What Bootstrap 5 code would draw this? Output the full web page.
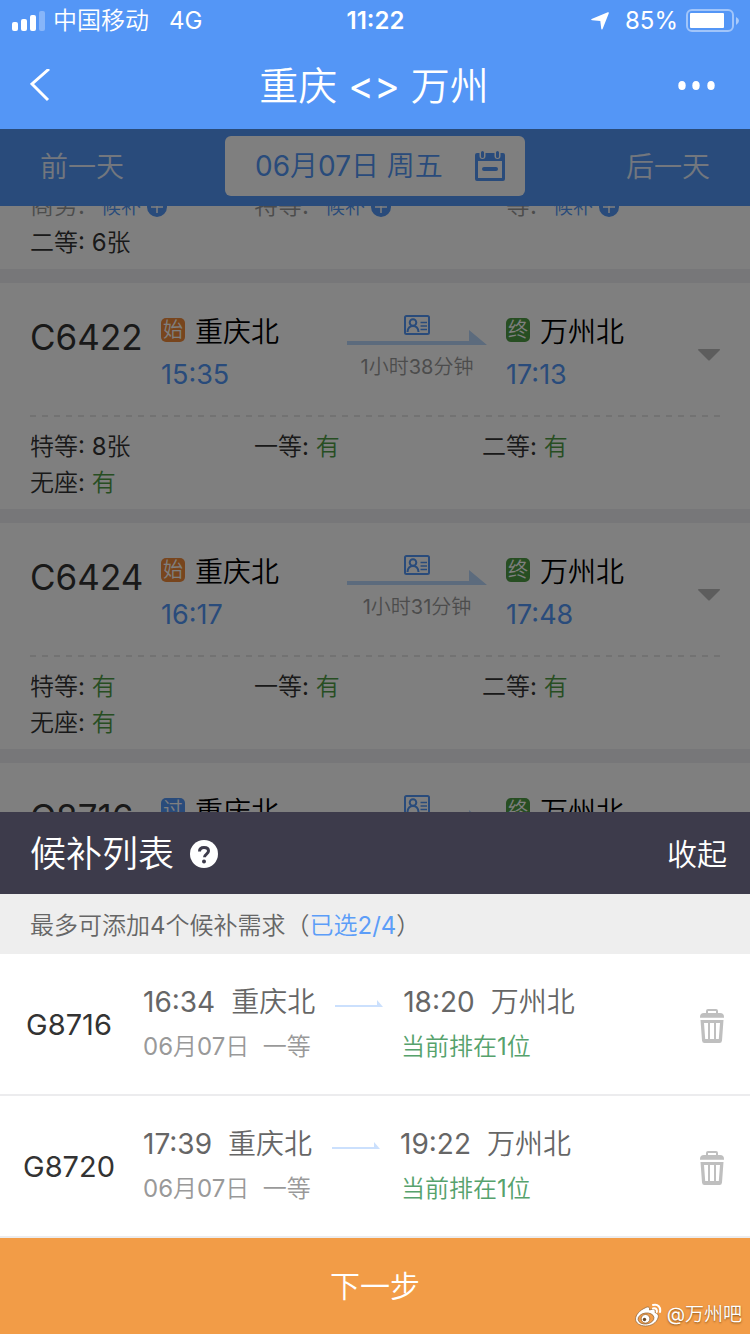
<!DOCTYPE html>
<html lang="zh-CN">
<head>
<meta charset="utf-8">
<meta name="viewport" content="width=device-width, initial-scale=1">
<title>重庆 - 万州 候补购票</title>
<link rel="stylesheet" href="https://cdn.jsdelivr.net/npm/bootstrap@5.3.0/dist/css/bootstrap.min.css">
<style>
  :root { --sky: #5496f6; --ink: #333; --leaf: #4e9c45; }
  body { font-family: Inter, "Noto Sans CJK SC DemiLight", "Noto Sans CJK SC", sans-serif; font-weight: 400; color: var(--ink); background: #fff; font-size: 24px; line-height: 36px; }
  button { font-weight: inherit; }
  svg { display: block; flex: none; }
  .plain { background: none; border: 0; padding: 0; color: inherit; }

  .app-top { background: var(--sky); color: #fff; }
  .status { height: 40px; padding: 2px 11px 0 12px; }
  .status > * { flex: 1; }
  .clock { font-weight: 600; }
  .network { margin-left: 20px; }
  .title-row { height: 89px; padding: 2px 32px 0 30px; }
  .title-row h1 { font-size: 39px; font-weight: 400; line-height: 56px; }
  .title-row button { width: 40px; }

  .date-bar { background: #5297f6; color: #e6effc; font-size: 28px; line-height: 44px; padding: 7px 40px 10px; }
  .date-bar button { padding-top: 2px; }
  .date-bar .date-pick { background: #fff; color: #5297f6; border-radius: 6px; height: 60px; width: 40vw; padding: 0 20px 0 30px; }

  .results { background: #eeeef3; overflow: hidden; min-height: 0; }
  .train { background: #fff; padding: 0 30px 8px; margin-bottom: 14px; }
  .train.scrolled { margin-top: -18px; }
  .seats { display: grid; grid-template-columns: 224fr 228fr 238fr; }
  .seats b { font-weight: 400; color: var(--leaf); }
  .wait-row { height: 37px; color: #999; }
  .wait-row a { color: #5297f6; font-size: 20px; text-decoration: none; gap: 6px; }
  .trip { display: grid; grid-template-columns: 131fr 186fr 140fr 19fr 190fr 24px; height: 132px; padding-top: 30px; }
  .train-no { font-size: 35px; line-height: 48px; }
  .stop { font-size: 28px; line-height: 38px; color: #000; }
  .hour { font-size: 27px; color: #5297f6; margin-top: 6px; }
  .tag { width: 24px; height: 24px; border-radius: 5px; font-size: 20px; line-height: 24px; color: #fff; text-align: center; margin: 0 10px 5px 0; }
  .tag-start { background: #f08a3a; } .tag-end { background: var(--leaf); } .tag-pass { background: #5297f6; }
  .ride { font-size: 20px; color: #999; line-height: 28px; }
  .more { padding-top: 35px; }
  .dashes { height: 2px; margin-bottom: 12px; background: repeating-linear-gradient(90deg, #e4e4e4 0 6px, transparent 6px 12px); }
  .shade { position: absolute; inset: 0; background: rgba(0,0,0,.5); }

  .sheet-head { background: #3d3b4b; color: #fff; height: 82px; padding: 2px 23px 0 30px; }
  .sheet-head h2 { font-size: 36px; font-weight: 400; line-height: 48px; }
  .fold { font-size: 30px; }
  .note { background: #eee; color: #666; padding: 14px 30px 10px; }
  .note span { color: #5c9df8; }
  .queue { height: 142px; border-bottom: 2px solid #ececee; padding: 4px 26px 0 0; }
  .queue-no { width: 138px; font-size: 29px; line-height: 40px; text-align: center; margin: 0 5px 2px 0; }
  .queue-main { font-size: 28px; color: #666; line-height: 42px; gap: 16px; }
  .queue-sub { color: #999; line-height: 48px; }
  .queue-sub > span:first-child { width: 258px; }
  .queue-sub .rank { color: #56a26c; }
  .next { background: #f29c47; color: #fff; height: 96px; font-size: 30px; }
  .credit { position: absolute; right: 8px; bottom: 4px; font-size: 19px; line-height: 30px; color: #fff; gap: 5px; text-shadow: 0 1px 2px rgba(90,50,0,.7); }
</style>
</head>
<body>
<svg width="0" height="0" class="position-absolute" aria-hidden="true">
  <symbol id="ride-line" viewBox="0 0 140 40">
    <path d="M0 28h122V17l18 15H0z" fill="#b8d6fb"/>
    <g fill="none" stroke="#5297f6" stroke-width="2"><rect x="58" y="3" width="24" height="18" rx="1.500"/><circle cx="66" cy="9.500" r="3.300"/><path d="M60.500 19c.3-4 2.500-6 5.500-6s5.200 2 5.500 6"/><path d="M73.500 9.500H80M73.500 13H80M73.500 16.500H80" stroke-width="1.500"/></g>
  </symbol>
  <symbol id="caret" viewBox="0 0 24 14"><path d="M3 1h20q2 0 .5 1.500L14 12q-1 1-2 0L2.500 2.500Q1 1 3 1z" fill="#bbb"/></symbol>
  <symbol id="plus" viewBox="0 0 20 20"><circle cx="10" cy="10" r="10" fill="#5297f6"/><path d="M10 4v12M4 10h12" stroke="#fff" stroke-width="1.500"/></symbol>
  <symbol id="short-line" viewBox="0 0 48 12"><path d="M0 9h42V4l6 7H0z" fill="#cbe0fd"/></symbol>
  <symbol id="bin" viewBox="0 0 24 34"><path fill="#bfbfbf" fill-rule="evenodd" d="M6 4V2q0-2 2-2h8q2 0 2 2v2h2q4 0 4 4v.7H0V8q0-4 4-4zm2 0h8V2H8zM.5 11h23L22 31.500q-.2 2.500-2.500 2.500h-15Q2.200 34 2 31.500zM4 14l1.200 16H8V14zm6 0v16h4V14zm6 0v16h2.800L20 14z"/></symbol>
</svg>

<div class="d-flex flex-column vh-100">
  <header class="app-top">
    <div class="status d-flex align-items-center">
      <div class="d-flex align-items-center">
        <svg width="33" height="20" viewBox="0 0 33 20" fill="#fff"><rect y="11" width="6" height="9" rx="2"/><rect x="9" y="8" width="6" height="12" rx="2"/><rect x="18" y="4" width="6" height="16" rx="2"/><rect x="27" width="6" height="20" rx="2" opacity=".3"/></svg>
        <span class="ms-2">中国移动</span><span class="network">4G</span>
      </div>
      <div class="clock text-center">11:22</div>
      <div class="d-flex align-items-center justify-content-end">
        <svg class="me-3" width="18" height="18" viewBox="0 0 18 18"><path d="M16.800.2q1.400-.3 1 1L11.800 16.500q-.9 2.300-1.600 0L9.300 9 1.200 8.300q-2.200-.6 0-1.600z" fill="#fff"/></svg>
        <span class="me-2">85%</span>
        <svg width="53" height="24" viewBox="0 0 53 24"><rect x="1" y="1" width="46" height="21" rx="5" fill="none" stroke="#fff" stroke-opacity=".45" stroke-width="2"/><rect x="4" y="4" width="34" height="15" rx="1" fill="#fff"/><path d="M50 8q6 3.500 0 8z" fill="#fff" opacity=".5"/></svg>
      </div>
    </div>
    <div class="title-row d-flex align-items-center justify-content-between">
      <button class="plain" aria-label="返回"><svg width="22" height="34" viewBox="0 0 22 34"><path d="M19 0 2 15l16 16" fill="none" stroke="#fff" stroke-width="3"/></svg></button>
      <h1 class="m-0">重庆 &lt;&gt; 万州</h1>
      <button class="plain" aria-label="更多"><svg width="40" height="10" viewBox="0 0 40 10" fill="#fff"><ellipse cx="4" cy="4.500" rx="3.700" ry="4.500"/><ellipse cx="18" cy="4.500" rx="3.700" ry="4.500"/><ellipse cx="33" cy="4.500" rx="3.700" ry="4.500"/></svg></button>
    </div>
  </header>

  <main class="position-relative flex-grow-1 d-flex flex-column overflow-hidden">
    <div class="date-bar d-flex align-items-center justify-content-between">
      <button class="plain">前一天</button>
      <button class="plain date-pick d-flex align-items-center justify-content-between">
        <span>06月07日 周五</span>
        <svg width="30" height="30" viewBox="0 0 30 30"><path fill="#5297f6" fill-rule="evenodd" d="M2 2h2.500v3q0 3 3 3t3-3V2h9v3q0 3 3 3t3-3V2H28q2 0 2 2v24q0 2-2 2H2q-2 0-2-2V4q0-2 2-2zm1 8v17h24V10z"/><path d="M7.500 1.500v4M22.500 1.500v4" stroke="#5297f6" stroke-width="3" stroke-linecap="round"/><path d="M9 18h12" stroke="#5297f6" stroke-width="4" stroke-linecap="round"/></svg>
      </button>
      <button class="plain">后一天</button>
    </div>

    <div class="results flex-grow-1">
      <section class="train scrolled">
        <div class="seats wait-row">
          <div class="d-flex">商务: <a href="#" class="d-flex align-items-center ms-3">候补<svg width="20" height="20"><use href="#plus"/></svg></a></div>
          <div class="d-flex">特等: <a href="#" class="d-flex align-items-center ms-3">候补<svg width="20" height="20"><use href="#plus"/></svg></a></div>
          <div class="d-flex">一等: <a href="#" class="d-flex align-items-center ms-3">候补<svg width="20" height="20"><use href="#plus"/></svg></a></div>
        </div>
        <div class="seats"><div>二等: 6张</div></div>
      </section>

      <section class="train">
        <div class="trip">
          <div class="train-no">C6422</div>
          <div><div class="stop d-flex align-items-center"><span class="tag tag-start">始</span>重庆北</div><div class="hour">15:35</div></div>
          <div class="ride text-center"><svg class="w-100" height="40"><use href="#ride-line"/></svg>1小时38分钟</div>
          <div></div>
          <div><div class="stop d-flex align-items-center"><span class="tag tag-end">终</span>万州北</div><div class="hour">17:13</div></div>
          <button class="plain more align-self-start" aria-label="展开"><svg width="24" height="14"><use href="#caret"/></svg></button>
        </div>
        <div class="dashes"></div>
        <div class="seats"><div>特等: 8张</div><div>一等: <b>有</b></div><div>二等: <b>有</b></div><div>无座: <b>有</b></div></div>
      </section>

      <section class="train">
        <div class="trip">
          <div class="train-no">C6424</div>
          <div><div class="stop d-flex align-items-center"><span class="tag tag-start">始</span>重庆北</div><div class="hour">16:17</div></div>
          <div class="ride text-center"><svg class="w-100" height="40"><use href="#ride-line"/></svg>1小时31分钟</div>
          <div></div>
          <div><div class="stop d-flex align-items-center"><span class="tag tag-end">终</span>万州北</div><div class="hour">17:48</div></div>
          <button class="plain more align-self-start" aria-label="展开"><svg width="24" height="14"><use href="#caret"/></svg></button>
        </div>
        <div class="dashes"></div>
        <div class="seats"><div>特等: <b>有</b></div><div>一等: <b>有</b></div><div>二等: <b>有</b></div><div>无座: <b>有</b></div></div>
      </section>

      <section class="train">
        <div class="trip">
          <div class="train-no">G8716</div>
          <div class="stop d-flex align-items-center align-self-start"><span class="tag tag-pass">过</span>重庆北</div>
          <div class="ride"><svg class="w-100" height="40"><use href="#ride-line"/></svg></div>
          <div></div>
          <div class="stop d-flex align-items-center align-self-start"><span class="tag tag-end">终</span>万州北</div>
        </div>
      </section>
    </div>
    <div class="shade"></div>
  </main>

  <section>
    <div class="sheet-head d-flex align-items-center">
      <h2 class="m-0">候补列表</h2>
      <button class="plain ms-3" aria-label="帮助"><svg width="28" height="28" viewBox="0 0 28 28"><circle cx="14" cy="14" r="14" fill="#fff"/><path d="M9.500 11.500q0-4 4.500-4t4.500 3.600c0 3-4 3.200-4 6.200" fill="none" stroke="#3d3b4b" stroke-width="3"/><circle cx="14" cy="21.500" r="2" fill="#3d3b4b"/></svg></button>
      <button class="plain fold ms-auto">收起</button>
    </div>
    <div class="note">最多可添加4个候补需求（<span>已选2/4</span>）</div>
    <div class="queue d-flex align-items-center">
      <div class="queue-no">G8716</div>
      <div class="flex-grow-1">
        <div class="queue-main d-flex align-items-center"><span>16:34</span><span>重庆北</span><svg class="mx-1" width="48" height="12"><use href="#short-line"/></svg><span>18:20</span><span>万州北</span></div>
        <div class="queue-sub d-flex"><span>06月07日 &nbsp;一等</span><span class="rank">当前排在1位</span></div>
      </div>
      <button class="plain" aria-label="删除"><svg width="24" height="34"><use href="#bin"/></svg></button>
    </div>
    <div class="queue d-flex align-items-center">
      <div class="queue-no">G8720</div>
      <div class="flex-grow-1">
        <div class="queue-main d-flex align-items-center"><span>17:39</span><span>重庆北</span><svg class="mx-1" width="48" height="12"><use href="#short-line"/></svg><span>19:22</span><span>万州北</span></div>
        <div class="queue-sub d-flex"><span>06月07日 &nbsp;一等</span><span class="rank">当前排在1位</span></div>
      </div>
      <button class="plain" aria-label="删除"><svg width="24" height="34"><use href="#bin"/></svg></button>
    </div>
    <div class="position-relative">
      <button class="plain next w-100 d-block">下一步</button>
      <div class="credit d-flex align-items-center">
        <svg width="27" height="24" viewBox="0 0 27 24"><g stroke="#8a6238" stroke-width=".7"><path d="M10 5c3-2 5-1 4.500 2 4-1.500 6.500-.5 5.500 2.500 3 1 4 3 3 5.500-1.500 5-7 8-12.500 8C5 23 .5 20 .5 16 .5 12 5 7 10 5z" fill="#fff"/><ellipse cx="11" cy="15.500" rx="8" ry="5.500" fill="#f29c47" transform="rotate(-8 11 15.500)"/><circle cx="10.500" cy="15.800" r="4.300" fill="#fff"/></g><circle cx="9.500" cy="16.500" r="1.700" fill="#6b4a28"/><path d="M18 2c5-1.500 8 2.500 7 7M18 5.500c2.800-.6 4.300 1 3.700 3.500" fill="none" stroke="#fff" stroke-width="2" stroke-linecap="round"/></svg>
        <span>@万州吧</span>
      </div>
    </div>
  </section>
</div>
<script src="https://cdn.jsdelivr.net/npm/bootstrap@5.3.0/dist/js/bootstrap.bundle.min.js"></script>
</body>
</html>
